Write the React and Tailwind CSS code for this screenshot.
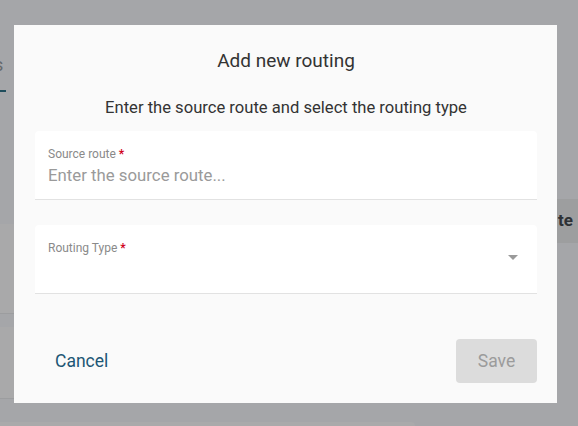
function Field({ label, children, select }) {
  return (
    <div className="relative h-[69px] rounded-t-[4px] bg-white border-b border-[#e2e2e2] pl-[13px] pr-[19px] pt-[15px]">
      <div className="text-[12px] leading-[17px] text-[#8a8a8a]">
        {label} <span className="text-[#d0021b] font-bold">*</span>
      </div>
      {children}
      {select && (
        <div className="absolute right-[19px] top-[30px] w-0 h-0 border-l-[5px] border-r-[5px] border-t-[5px] border-l-transparent border-r-transparent border-t-[#9a9a9a]" />
      )}
    </div>
  );
}

export default function App() {
  return (
    <div className="relative w-full h-[426px] bg-[#a5a6a9] overflow-hidden font-['Roboto',sans-serif]">
      {/* page behind the overlay */}
      <div className="flex flex-col h-full">
        <div className="flex justify-between flex-1">
          <div className="w-[14px] flex flex-col">
            <div className="h-[52px]" />
            <div className="text-[18px] leading-[26px] text-[#66696d] -ml-[6px]">s</div>
            <div className="h-[12px]" />
            <div className="h-[2px] w-[6px] bg-[#1f4d5c]" />
            <div className="h-[132px]" />
            <div className="h-[89px] bg-[#a9a9aa]" />
            <div className="h-px bg-[#9c9d9f]" />
            <div className="h-[13px]" />
            <div className="h-[71px] bg-[#a9a9aa]" />
            <div className="h-px bg-[#9c9d9f]" />
          </div>
          <div className="w-[21px] flex flex-col">
            <div className="h-[199px]" />
            <div className="h-[44px] bg-[#9d9e9f] flex items-center pl-[1px] text-[17px] font-bold text-[#2d3135]">te</div>
          </div>
        </div>
        <div className="h-[4px] w-[415px] bg-[#aaaaab] rounded-tr-[4px]" />
      </div>

      {/* dialog */}
      <div className="absolute left-[14px] top-[25px] w-[543px] h-[378px] bg-[#fafafa] pl-[21px] pr-[20px] flex flex-col">
        <h2 className="text-center text-[19px] leading-[24px] text-[#333] mt-[24px]">Add new routing</h2>
        <p className="text-center text-[16.6px] leading-[22px] text-[#333] mt-[24px]">
          Enter the source route and select the routing type
        </p>
        <div className="mt-[12px]">
          <Field label="Source route">
            <div className="text-[16.8px] leading-[24px] text-[#9a9a9a]">Enter the source route...</div>
          </Field>
        </div>
        <div className="mt-[25px]">
          <Field label="Routing Type" select />
        </div>
        <div className="flex items-center justify-between mt-[45px]">
          <button className="ml-[20px] text-[17.5px] text-[#1d5675]">Cancel</button>
          <button className="w-[81px] h-[44px] rounded-[4px] bg-[#dcdcdc] text-[17.5px] text-[#9b9b9b]">Save</button>
        </div>
      </div>
    </div>
  );
}
